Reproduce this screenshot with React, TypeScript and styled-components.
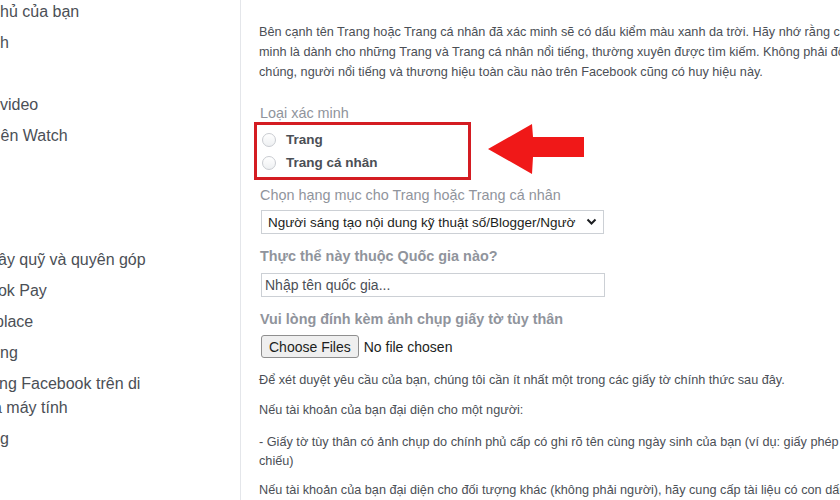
import React from 'react';
import styled, { createGlobalStyle } from 'styled-components';

const GlobalStyle = createGlobalStyle`
  html, body {
    margin: 0;
    padding: 0;
    background: #ffffff;
  }
  body {
    font-family: "Liberation Sans", Arial, sans-serif;
  }
`;

const Page = styled.div`
  width: 840px;
  height: 500px;
  display: flex;
  overflow: hidden;
  background: #ffffff;
`;

// left menu, cut at the window edge
const Sidebar = styled.nav`
  width: 240px;
  flex-shrink: 0;
  border-right: 1px solid #e4e6ea;
  display: flex;
  flex-direction: column;
  gap: 7px;
  margin-top: -0.5px;
  overflow: hidden;
`;

const SideItem = styled.div`
  font-size: 16px;
  line-height: 24px;
  color: #4b4f56;
  white-space: nowrap;
  overflow: hidden;
`;

const SideLine = styled.div<{ indent?: number }>`
  text-indent: ${(props) => props.indent ?? 0}px;
`;

const Main = styled.main`
  flex: 1;
  min-width: 0;
  padding: 22px 0 0 18px;
  display: flex;
  flex-direction: column;
  overflow: hidden;
`;

const Intro = styled.p`
  margin: 0;
  font-size: 12.7px;
  line-height: 20px;
  color: #4b4f56;
  white-space: nowrap;
`;

const FieldLabel = styled.div<{ bold?: boolean; gap: number }>`
  margin-top: ${(props) => props.gap}px;
  margin-left: 1px;
  font-size: 14.4px;
  line-height: 18px;
  color: #90949c;
  font-weight: ${(props) => (props.bold ? 700 : 400)};
  white-space: nowrap;
`;

const TypeRow = styled.div`
  display: flex;
  align-items: center;
  gap: 17px;
  margin-left: -5px;
`;

const Highlight = styled.div`
  width: 217px;
  height: 58px;
  box-sizing: border-box;
  border: 3px solid #d41c22;
  padding: 3px 0 0 5px;
  display: flex;
  flex-direction: column;
`;

const RadioRow = styled.label`
  display: flex;
  align-items: center;
  gap: 10px;
  height: 23px;
  font-size: 13.5px;
  font-weight: 700;
  color: #4b4f56;
`;

const RadioCircle = styled.span`
  width: 14px;
  height: 14px;
  box-sizing: border-box;
  border-radius: 50%;
  border: 1px solid #c9ccd1;
  background: linear-gradient(#ffffff, #eef0f2);
`;

const Arrow = styled.svg`
  display: block;
  margin-top: -4px;
`;

const SelectBox = styled.div`
  margin: 6px 0 0 2px;
  width: 343px;
  height: 26px;
  box-sizing: border-box;
  border: 1px solid #ccd0d5;
  display: flex;
  align-items: center;
  justify-content: space-between;
  padding: 0 6px 0 6px;
  font-size: 13.5px;
  color: #1c1e21;
  white-space: nowrap;
  overflow: hidden;
`;

const TextInput = styled.div`
  margin: 8px 0 0 2px;
  width: 344px;
  height: 26px;
  box-sizing: border-box;
  border: 1px solid #ccd0d5;
  display: flex;
  align-items: center;
  padding: 0 3px;
  font-size: 14px;
  color: #4b4f56;
`;

const FileRow = styled.div`
  margin-top: 7px;
  display: flex;
  align-items: center;
  gap: 5px;
  font-size: 14px;
  color: #1c1e21;
`;

const FileButton = styled.button`
  height: 23px;
  margin-left: 2px;
  padding: 0 7px;
  font-family: inherit;
  font-size: 14px;
  color: #1c1e21;
  background: #efefef;
  border: 1px solid #8f8f8f;
  border-radius: 3px;
`;

const Note = styled.p<{ gap: number }>`
  margin: ${(props) => props.gap}px 0 0;
  font-size: 12.7px;
  line-height: 19px;
  color: #4b4f56;
  white-space: nowrap;
`;

const sideItems: { lines: string[]; indent?: number[] }[] = [
  { lines: ['hủ của bạn'] },
  { lines: ['nh'], indent: [-9] },
  { lines: ['\u00a0'] },
  { lines: ['video'] },
  { lines: ['iên Watch'], indent: [-3] },
  { lines: ['\u00a0'] },
  { lines: ['\u00a0'] },
  { lines: ['\u00a0'] },
  { lines: ['ây quỹ và quyên góp'], indent: [-2] },
  { lines: ['ook Pay'], indent: [-11] },
  { lines: ['place'], indent: [-5] },
  { lines: ['ng'] },
  { lines: ['ng Facebook trên di', 'a máy tính'], indent: [-1, -7] },
  { lines: ['g'] },
];

const App = () => {
  return (
    <>
      <GlobalStyle />
      <Page>
        <Sidebar>
          {sideItems.map((item, i) => (
            <SideItem key={i}>
              {item.lines.map((line, j) => (
                <SideLine key={j} indent={item.indent?.[j]}>
                  {line}
                </SideLine>
              ))}
            </SideItem>
          ))}
        </Sidebar>

        <Main>
          <Intro>
            Bên cạnh tên Trang hoặc Trang cá nhân đã xác minh sẽ có dấu kiểm màu xanh da trời. Hãy nhớ rằng chúng tôi chỉ xác
            <br />
            minh là dành cho những Trang và Trang cá nhân nổi tiếng, thường xuyên được tìm kiếm. Không phải đối tượng nào cũng
            <br />
            chúng, người nổi tiếng và thương hiệu toàn cầu nào trên Facebook cũng có huy hiệu này.
          </Intro>

          <FieldLabel gap={22}>Loại xác minh</FieldLabel>
          <TypeRow>
            <Highlight>
              <RadioRow>
                <RadioCircle />
                Trang
              </RadioRow>
              <RadioRow>
                <RadioCircle />
                Trang cá nhân
              </RadioRow>
            </Highlight>
            <Arrow width="96" height="50" viewBox="0 0 96 50">
              <polygon points="0,25 44,0 45,13 96,13 96,33 45,33 44,50" fill="#f01818" />
            </Arrow>
          </TypeRow>

          <FieldLabel gap={6}>Chọn hạng mục cho Trang hoặc Trang cá nhân</FieldLabel>
          <SelectBox>
            <span>Người sáng tạo nội dung kỹ thuật số/Blogger/Ngườ</span>
            <svg width="11" height="8" viewBox="0 0 11 8">
              <path d="M1.5 1.5 L5.5 5.5 L9.5 1.5" fill="none" stroke="#1c1e21" strokeWidth="2" />
            </svg>
          </SelectBox>

          <FieldLabel bold gap={13}>Thực thể này thuộc Quốc gia nào?</FieldLabel>
          <TextInput>Nhập tên quốc gia...</TextInput>

          <FieldLabel bold gap={13}>Vui lòng đính kèm ảnh chụp giấy tờ tùy thân</FieldLabel>
          <FileRow>
            <FileButton type="button">Choose Files</FileButton>
            <span>No file chosen</span>
          </FileRow>

          <Note gap={13}>
            Để xét duyệt yêu cầu của bạn, chúng tôi cần ít nhất một trong các giấy tờ chính thức sau đây.
          </Note>
          <Note gap={11}>Nếu tài khoản của bạn đại diện cho một người:</Note>
          <Note gap={13}>
            - Giấy tờ tùy thân có ảnh chụp do chính phủ cấp có ghi rõ tên cùng ngày sinh của bạn (ví dụ: giấy phép lái xe, hộ
            <br />
            chiếu)
          </Note>
          <Note gap={10}>
            Nếu tài khoản của bạn đại diện cho đối tượng khác (không phải người), hãy cung cấp tài liệu có con dấu chính thức
          </Note>
        </Main>
      </Page>
    </>
  );
};

export default App;
